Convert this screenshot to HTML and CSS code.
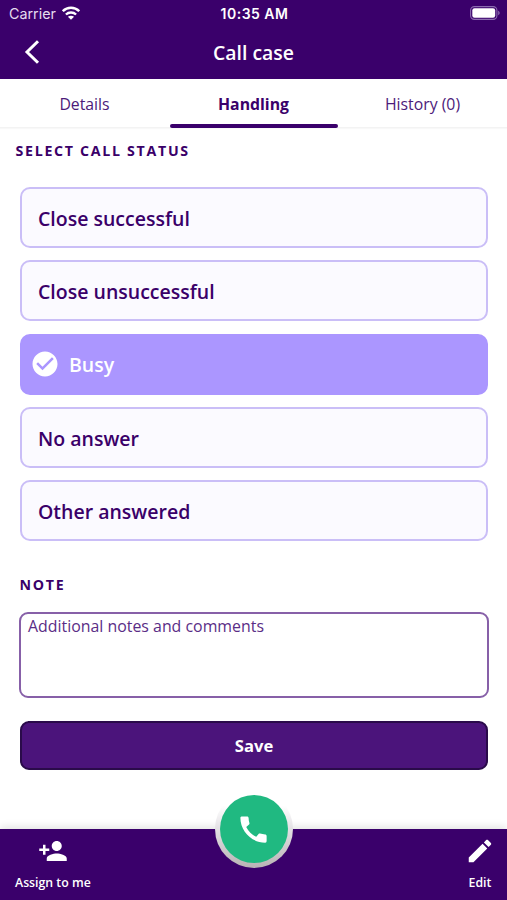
FILE: index.html
```html
<!DOCTYPE html>
<html lang="en">
<head>
    <meta charset="UTF-8">
    <meta name="viewport" content="width=device-width, initial-scale=1.0">
    <title>Call case</title>
    <link rel="stylesheet" href="styles.css">
</head>
<body>
    <header class="header">
        <div class="status-bar">
            <div class="carrier">
                <span>Carrier</span>
                <svg class="wifi" viewBox="0 0 18 14">
                    <path d="M.8 5.2C5.4.7 12.6.7 17.2 5.2" fill="none" stroke="#fff" stroke-width="2.5"/>
                    <path d="M3.9 8.5c2.8-2.7 7.4-2.7 10.2 0" fill="none" stroke="#fff" stroke-width="2.3"/>
                    <path d="M9 13.8L5.9 10.8c1.7-1.5 4.5-1.5 6.2 0z" fill="#fff"/>
                </svg>
            </div>
            <span class="clock">10:35 AM</span>
            <svg class="battery" viewBox="0 0 30 14">
                <rect x=".6" y=".6" width="26.3" height="12.8" rx="3.8" fill="none" stroke="#8c6bb0" stroke-width="1.1"/>
                <rect x="2.3" y="2.3" width="22.9" height="9.4" rx="2.2" fill="#fff"/>
                <path d="M28.2 4.8c1.9.7 1.9 3.7 0 4.4z" fill="#8c6bb0"/>
            </svg>
        </div>
        <div class="title-bar">
            <svg class="back-icon" viewBox="0 0 16 24">
                <path d="M14 1.2L3 12l11 10.8" fill="none" stroke="#fff" stroke-width="3"/>
            </svg>
            <h1>Call case</h1>
        </div>
    </header>

    <nav class="tabs">
        <a class="tab">Details</a>
        <a class="tab active">Handling</a>
        <a class="tab">History (0)</a>
    </nav>

    <main class="content">
        <h2 class="section-title">SELECT CALL STATUS</h2>
        <ul class="options">
            <li class="option">Close successful</li>
            <li class="option">Close unsuccessful</li>
            <li class="option selected">
                <svg class="check-icon" viewBox="0 0 24 24">
                    <path fill="#fff" d="M12 2C6.48 2 2 6.48 2 12s4.48 10 10 10 10-4.48 10-10S17.52 2 12 2zm-2 15l-5-5 1.41-1.41L10 14.17l7.59-7.59L19 8l-9 9z"/>
                </svg>
                Busy
            </li>
            <li class="option">No answer</li>
            <li class="option">Other answered</li>
        </ul>
        <h2 class="section-title note-title">NOTE</h2>
        <textarea class="note" placeholder="Additional notes and comments"></textarea>
        <button class="save">Save</button>
    </main>

    <!-- Bottom bar -->
    <footer class="bottom-bar">
        <a class="action">
            <svg class="action-icon" viewBox="0 0 24 24">
                <path fill="#fff" d="M15 12c2.21 0 4-1.79 4-4s-1.79-4-4-4-4 1.79-4 4 1.79 4 4 4zm-9-2V7H4v3H1v2h3v3h2v-3h3v-2H6zm9 4c-2.67 0-8 1.34-8 4v2h16v-2c0-2.66-5.33-4-8-4z"/>
            </svg>
            <span>Assign to me</span>
        </a>
        <a class="action">
            <svg class="action-icon" viewBox="0 0 24 24">
                <path fill="#fff" d="M3 17.25V21h3.75L17.81 9.94l-3.75-3.75L3 17.25zM20.71 7.04c.39-.39.39-1.02 0-1.41l-2.34-2.34c-.39-.39-1.02-.39-1.41 0l-1.83 1.83 3.75 3.75 1.83-1.83z"/>
            </svg>
            <span>Edit</span>
        </a>
        <a class="call-button">
            <svg class="phone-icon" viewBox="0 0 24 24">
                <path fill="#fff" d="M20.01 15.38c-1.23 0-2.42-.2-3.53-.56-.35-.12-.74-.03-1.01.24l-1.57 1.97c-2.83-1.35-5.48-3.9-6.89-6.83l1.95-1.66c.27-.28.35-.67.24-1.02-.37-1.11-.56-2.3-.56-3.53 0-.54-.45-.99-.99-.99H4.19C3.65 3 3 3.24 3 3.99 3 13.28 10.73 21 20.01 21c.71 0 .99-.63.99-1.18v-3.45c0-.54-.45-.99-.99-.99z"/>
            </svg>
        </a>
    </footer>
</body>
</html>
```

FILE: styles.css
```css
* {
    box-sizing: border-box;
}

body {
    font-family: "Open Sans", "Noto Sans", sans-serif;
    margin: 0;
    height: 900px;
    display: flex;
    flex-direction: column;
    background-color: #fff;
    color: #3a0069;
    overflow: hidden;
}

/* Header */
.header {
    height: 79px;
    background-color: #3a006b;
    color: #fff;
}

.status-bar {
    display: grid;
    grid-template-columns: 1fr auto 1fr;
    align-items: center;
    height: 27px;
    padding: 0 7px 0 9px;
    font-family: Inter, Roboto, sans-serif;
    font-size: 14.3px;
}

.carrier {
    display: flex;
    align-items: center;
    gap: 6px;
    color: #e6dcef;
}

.wifi {
    width: 18px;
    height: 14px;
    margin-top: -2px;
}

.clock {
    font-weight: 600;
    font-size: 14px;
    letter-spacing: 0.5px;
}

.battery {
    width: 30px;
    height: 14px;
    margin-top: -1px;
    justify-self: end;
}

.title-bar {
    display: grid;
    grid-template-columns: 1fr auto 1fr;
    align-items: center;
    height: 50px;
    padding: 0 24px;
}

.back-icon {
    width: 16px;
    height: 24px;
}

.title-bar h1 {
    margin: 1px 0 0;
    font-size: 19.4px;
    font-weight: 600;
}

/* Tabs */
.tabs {
    display: grid;
    grid-template-columns: repeat(3, 1fr);
    height: 49px;
    border-bottom: 1px solid #f3f3f3;
    box-shadow: 0 1px 1px #f8f8f8;
}

.tab {
    height: 49px;
    line-height: 50px;
    font-size: 15.8px;
    text-align: center;
    color: #4c1b7a;
}

.tab.active {
    font-weight: 700;
    color: #3a0069;
}

.tab.active::after {
    content: "";
    display: block;
    height: 4px;
    margin: -5px 0 0 1px;
    border-radius: 2px;
    background-color: #3a006b;
}

/* Call status */
.content {
    flex: 1;
    padding: 0 19px 0 20px;
}

.section-title {
    margin: 12px 0 0 -4.5px;
    font-size: 14.2px;
    line-height: 21px;
    font-weight: 700;
    letter-spacing: 1.7px;
}

.options {
    list-style: none;
    margin: 26px 0 0;
    padding: 0;
    display: grid;
    gap: 12.3px;
}

.option {
    display: flex;
    align-items: center;
    height: 61px;
    padding: 2px 16px 0;
    border: 2px solid #cabef7;
    border-radius: 10px;
    background-color: #fbfaff;
    font-size: 19.5px;
    font-weight: 600;
}

.option.selected {
    padding: 1px 9px 0 8px;
    gap: 9px;
    background-color: #ab96ff;
    border-color: #ab96ff;
    color: #fff;
}

.check-icon {
    width: 30px;
    height: 30px;
    margin-top: -1px;
}

/* Note */
.note-title {
    margin: 33px 0 0 -0.5px;
}

.note {
    display: block;
    width: 470px;
    height: 86px;
    margin: 17px 0 0 -1px;
    padding: 2px 7px;
    border: 2px solid #8760a8;
    border-radius: 9px;
    resize: none;
    font: 15.9px/21px "Open Sans", "Noto Sans", sans-serif;
}

.note::placeholder {
    color: #5a2d86;
}

.save {
    display: block;
    width: 100%;
    height: 49px;
    margin-top: 23px;
    border: 2px solid #2a0b4a;
    border-radius: 9px;
    background-color: #4b147b;
    color: #fff;
    font: 700 16.6px "Open Sans", "Noto Sans", sans-serif;
}

/* Bottom bar */
.bottom-bar {
    position: relative;
    display: flex;
    justify-content: space-between;
    height: 71px;
    padding: 7px 12px 0 15px;
    background-color: #3a006b;
    box-shadow: 0 -2px 8px rgba(0, 0, 0, 0.12);
}

.action {
    display: flex;
    flex-direction: column;
    align-items: center;
    color: #fff;
    font-size: 12.3px;
    line-height: 18px;
    font-weight: 600;
}

.action-icon {
    width: 30px;
    height: 30px;
    margin-bottom: 8px;
}

/* Sits over the top edge of the bar */
.call-button {
    position: absolute;
    left: 50%;
    top: -39px;
    width: 78px;
    height: 78px;
    margin-left: -39px;
    display: flex;
    align-items: center;
    justify-content: center;
    border: 5px solid transparent;
    border-radius: 50%;
    background: linear-gradient(#20b981, #20b981) padding-box, linear-gradient(#fff 20%, #e3e0e4 50%, #b9b3b5) border-box;
}

.phone-icon {
    width: 35px;
    height: 35px;
}
```
